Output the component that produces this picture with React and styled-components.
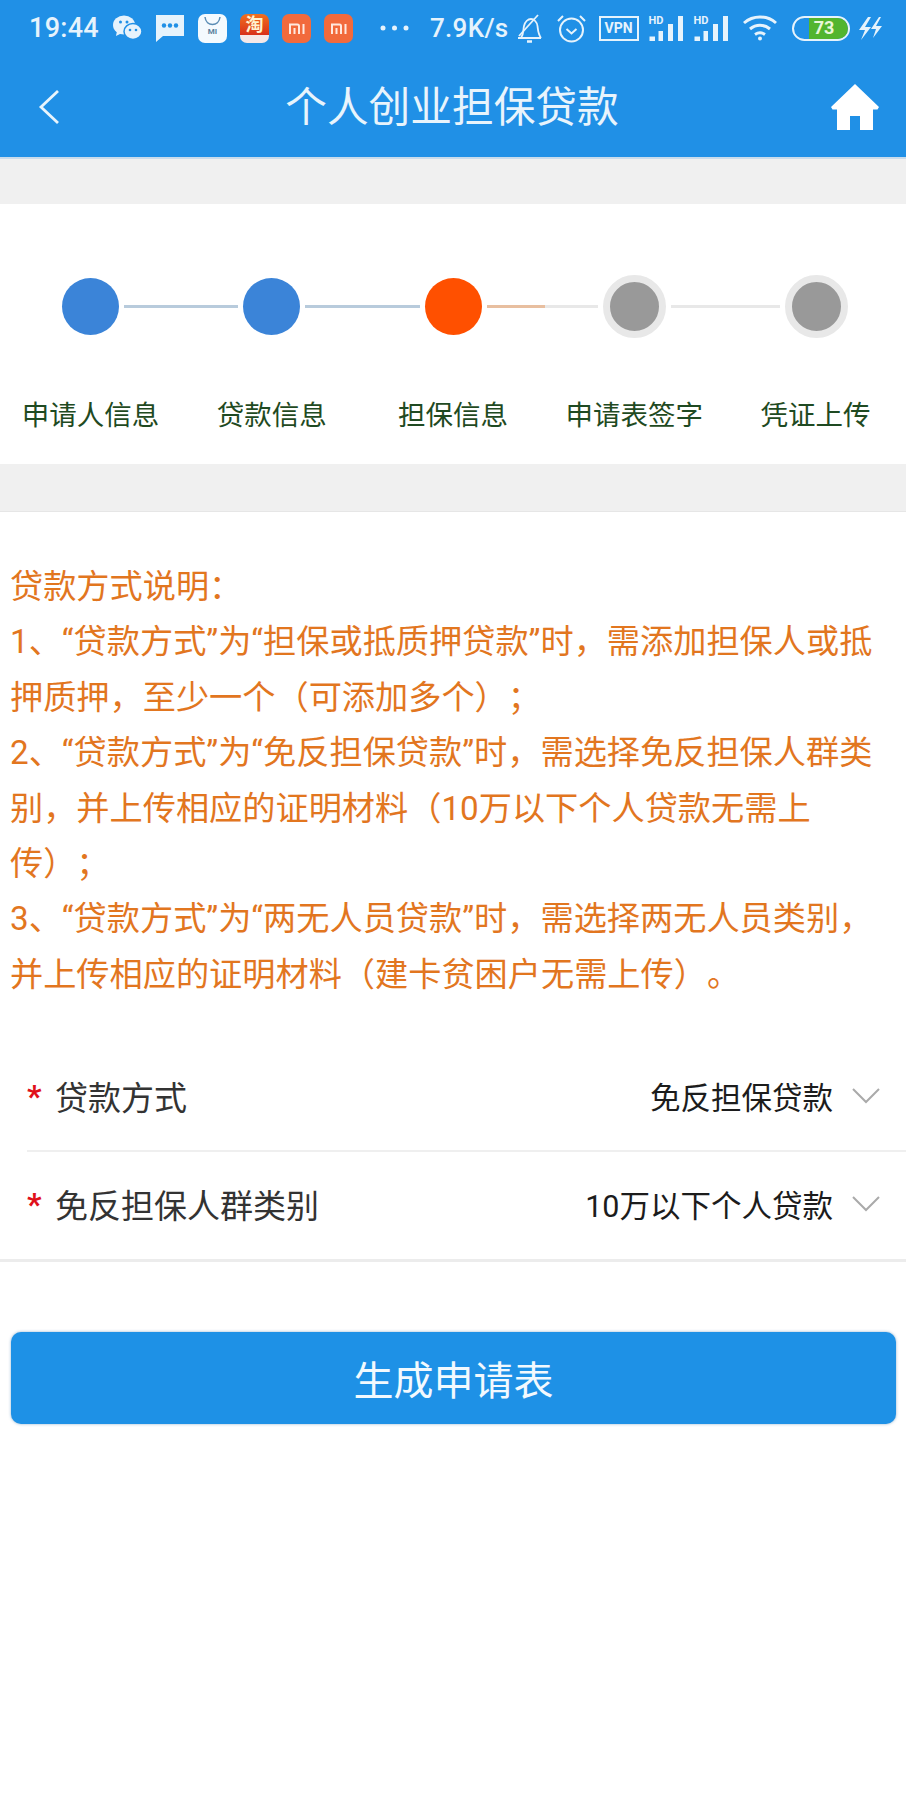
import React from "react";
import styled, { createGlobalStyle } from "styled-components";

const GlobalStyle = createGlobalStyle`
  html, body {
    margin: 0;
    padding: 0;
    background: #ffffff;
    font-family: Roboto, "Noto Sans CJK SC", sans-serif;
  }
`;

const Page = styled.div`
  width: 906px;
  height: 1812px;
  background: #ffffff;
  overflow: hidden;
`;

const Header = styled.header`
  background: #2090e6;
  height: 157px;
  border-bottom: 2px solid #c9dcec;
  box-sizing: content-box;
`;

const StatusBar = styled.div`
  height: 56px;
  display: flex;
  align-items: center;
  padding-left: 29px;
  color: #e6f3fc;
`;

const StatusText = styled.span`
  font-size: ${(p) => p.$size || 26}px;
  font-weight: 500;
  margin-left: ${(p) => p.$ml || 0}px;
  letter-spacing: 0.3px;
  white-space: nowrap;
`;

const Slot = styled.span`
  display: inline-flex;
  margin-left: ${(p) => p.$ml || 0}px;
`;

const AppIcon = styled.span`
  position: relative;
  display: inline-flex;
  align-items: center;
  justify-content: center;
  flex: none;
  width: 29px;
  height: 29px;
  margin-left: ${(p) => p.$ml || 0}px;
  border-radius: 7px;
  background: ${(p) => p.$bg};
  color: ${(p) => p.$color || "#fff"};
  font-size: ${(p) => p.$size || 11}px;
  font-weight: 700;
  line-height: 1;
`;

const StoreArc = styled.svg`
  position: absolute;
  left: 6px;
  top: 3px;
`;

const StoreMark = styled.span`
  margin-top: 8px;
`;

const TaobaoMark = styled.span`
  margin-top: -6px;
`;

const VpnBadge = styled.span`
  display: inline-flex;
  align-items: center;
  justify-content: center;
  box-sizing: border-box;
  width: 40px;
  height: 25px;
  margin-left: 13px;
  border: 2px solid #e6f3fc;
  font-size: 14px;
  font-weight: 700;
`;

const HdSignal = styled.span`
  display: inline-flex;
  position: relative;
  width: 35px;
  height: 25px;
  margin-left: ${(p) => p.$ml || 0}px;
`;

const HdLabel = styled.span`
  position: absolute;
  left: 0;
  top: -1px;
  font-size: 11px;
  font-weight: 700;
  line-height: 1;
`;

const Battery = styled.span`
  display: inline-flex;
  align-items: center;
  box-sizing: border-box;
  width: 58px;
  height: 25px;
  margin-left: 14px;
  padding-left: 15px;
  border: 2px solid #e6f3fc;
  border-radius: 13px;
  overflow: hidden;
`;

const BatteryFill = styled.span`
  display: inline-flex;
  align-items: center;
  justify-content: center;
  box-sizing: border-box;
  height: 100%;
  width: 100%;
  padding-right: 8px;
  background: #52b52e;
  color: #e9f7d8;
  font-size: 18px;
  font-weight: 700;
  line-height: 1;
`;

const NavBar = styled.div`
  height: 101px;
  display: grid;
  grid-template-columns: 1fr auto 1fr;
  align-items: center;
`;

const BackButton = styled.button`
  justify-self: start;
  display: flex;
  padding: 0 0 0 38px;
  border: 0;
  background: none;
`;

const Title = styled.h1`
  margin: 2px 2px 0 0;
  color: #e8f4fc;
  font-size: 41.7px;
  font-weight: 400;
  line-height: 1;
`;

const HomeButton = styled.button`
  justify-self: end;
  display: flex;
  padding: 0 27px 0 0;
  border: 0;
  background: none;
`;

const Band = styled.div`
  height: ${(p) => p.$h}px;
  background: #f0f0f0;
  border-bottom: ${(p) => (p.$line ? "1px solid #e6e6e6" : "0")};
`;

const Stepper = styled.section`
  height: 260px;
  background: #fff;
`;

const Track = styled.div`
  display: flex;
  align-items: center;
  height: 63px;
  padding: 71px 0 0 62px;
`;

const Dot = styled.span`
  flex: none;
  box-sizing: border-box;
  width: ${(p) => (p.$state === "todo" ? 63 : 57)}px;
  height: ${(p) => (p.$state === "todo" ? 63 : 57)}px;
  border-radius: 50%;
  background: ${(p) =>
    p.$state === "done" ? "#3b84d8" : p.$state === "now" ? "#ff5000" : "#999999"};
  border: ${(p) => (p.$state === "todo" ? "7px solid #e8e8e8" : "0")};
`;

const Line = styled.span`
  flex: none;
  width: ${(p) => p.$w}px;
  height: 3px;
  margin: 0 5px;
  background: ${(p) => p.$bg};
`;

const Labels = styled.div`
  display: grid;
  grid-template-columns: repeat(5, 1fr);
  margin-top: 58px;
`;

const Label = styled.span`
  text-align: center;
  color: #1f4a22;
  font-size: 27.5px;
  line-height: 40px;
`;

const Notice = styled.div`
  margin: 47px 0 0;
  padding: 0 18px 0 10px;
  color: #e2761f;
  font-size: 33.2px;
  line-height: 55.4px;
  text-spacing-trim: space-all;
`;

const Form = styled.div`
  margin-top: 43px;
  border-bottom: 3px solid #ececec;
`;

const Row = styled.div`
  display: flex;
  box-sizing: border-box;
  align-items: center;
  height: 107px;
  margin-left: 27px;
  padding-bottom: 3px;
  border-bottom: ${(p) => (p.$last ? "0" : "2px solid #efefef")};
`;

const Star = styled.span`
  width: 28px;
  color: #e0101a;
  font-size: 32px;
  font-weight: 700;
  line-height: 1;
`;

const RowLabel = styled.span`
  flex: 1;
  color: #333333;
  font-size: 33px;
`;

const RowValue = styled.span`
  color: #1c1c1c;
  font-size: 30.5px;
`;

const Chevron = styled.span`
  display: flex;
  margin: 0 26px 0 19px;
`;

const SubmitWrap = styled.div`
  padding: 70px 10px 0 11px;
`;

const Submit = styled.button`
  display: block;
  width: 100%;
  height: 92px;
  border: 0;
  border-radius: 10px;
  background: #1e91e6;
  box-shadow: 0 0 3px rgba(30, 100, 160, 0.5);
  color: #f2f9fe;
  font-family: inherit;
  font-size: 40px;
`;

const steps = [
  { label: "申请人信息", state: "done" },
  { label: "贷款信息", state: "done" },
  { label: "担保信息", state: "now" },
  { label: "申请表签字", state: "todo" },
  { label: "凭证上传", state: "todo" },
];

const lines = [
  "贷款方式说明：",
  "1、“贷款方式”为“担保或抵质押贷款”时，需添加担保人或抵押质押，至少一个（可添加多个）；",
  "2、“贷款方式”为“免反担保贷款”时，需选择免反担保人群类别，并上传相应的证明材料（10万以下个人贷款无需上传）；",
  "3、“贷款方式”为“两无人员贷款”时，需选择两无人员类别，并上传相应的证明材料（建卡贫困户无需上传）。",
];

const C = "#e6f3fc";

const Wechat = () => (
  <svg width="29" height="26" viewBox="0 0 29 26">
    <ellipse cx="11" cy="10" rx="11" ry="9.5" fill={C} />
    <path d="M4 16l-1 5 6-3z" fill={C} />
    <ellipse cx="20" cy="16.5" rx="9" ry="8" fill={C} stroke="#2090e6" strokeWidth="1.5" />
    <circle cx="7.5" cy="7" r="1.5" fill="#2090e6" />
    <circle cx="14" cy="7" r="1.5" fill="#2090e6" />
    <circle cx="17" cy="15" r="1.3" fill="#2090e6" />
    <circle cx="23" cy="15" r="1.3" fill="#2090e6" />
  </svg>
);

const Message = () => (
  <svg width="28" height="27" viewBox="0 0 28 27">
    <path d="M0 0h28v21H7l-7 6z" fill={C} />
    <circle cx="8" cy="10.5" r="2.2" fill="#2090e6" />
    <circle cx="14" cy="10.5" r="2.2" fill="#2090e6" />
    <circle cx="20" cy="10.5" r="2.2" fill="#2090e6" />
  </svg>
);

const MiLogo = () => (
  <svg width="16" height="11" viewBox="0 0 16 11" fill="none" stroke="#ffe9df" strokeWidth="2">
    <path d="M1 11V1.500h7.500a1.500 1.500 0 0 1 1.500 1.500v8M5.500 5v6M14.500 1v10" />
  </svg>
);

const Dots = () => (
  <svg width="29" height="6" viewBox="0 0 29 6" fill={C}>
    <circle cx="3" cy="3" r="2.5" />
    <circle cx="14.5" cy="3" r="2.5" />
    <circle cx="26" cy="3" r="2.5" />
  </svg>
);

const Bell = () => (
  <svg width="27" height="29" viewBox="0 0 27 29" fill="none" stroke={C} strokeWidth="1.8">
    <path d="M2 24h23M5 24c3-4 2-8 3-12s4-7 7-7 6 3 6.500 7 .5 8 3.500 12" />
    <path d="M11 27.500h5" strokeWidth="2.500" />
    <path d="M3 22L22 1" />
  </svg>
);

const Alarm = () => (
  <svg width="29" height="29" viewBox="0 0 29 29" fill="none" stroke={C} strokeWidth="2">
    <circle cx="14.500" cy="16" r="11.500" />
    <path d="M9.500 15l5 4.500 5-4.500" />
    <path d="M1 7l5-5M28 7l-5-5" />
  </svg>
);

const Bars = () => (
  <svg width="35" height="25" viewBox="0 0 35 25" fill={C}>
    <rect x="0.500" y="20.500" width="5.500" height="4.500" />
    <rect x="9.500" y="15" width="4.500" height="10" />
    <rect x="19" y="8" width="5" height="17" />
    <rect x="29" y="0" width="5" height="25" />
  </svg>
);

const Wifi = () => (
  <svg width="36" height="26" viewBox="0 0 36 26" fill="none" stroke={C} strokeWidth="3">
    <path d="M2 8c9-8 23-8 32 0" />
    <path d="M8 14c6-5 14-5 20 0" />
    <path d="M13 19.500c3-2 7-2 10 0" />
    <circle cx="18" cy="23.500" r="2" fill={C} stroke="none" />
  </svg>
);

const Charge = () => (
  <svg width="24" height="25" viewBox="0 0 24 25" fill={C}>
    <path d="M10 1L1 14h6l-4 10 10-13H7l6-10z" />
    <path d="M21 1l-8 12h5l-3 9 9-12h-6l5-9z" />
  </svg>
);

const Store = () => (
  <AppIcon $ml={14} $bg="#f4fafe" $color="#5a7f9c" $size={8}>
    <StoreArc width="17" height="9" viewBox="0 0 17 9" fill="none" stroke="#5a8cb4" strokeWidth="1.500">
      <path d="M1 0c1 10 14 10 15 0" />
    </StoreArc>
    <StoreMark>MI</StoreMark>
  </AppIcon>
);

const Caret = () => (
  <Chevron>
    <svg width="28" height="16" viewBox="0 0 28 16" fill="none" stroke="#aaaaaa" strokeWidth="2">
      <path d="M1 1l13 13L27 1" />
    </svg>
  </Chevron>
);

export default function App() {
  return (
    <Page>
      <GlobalStyle />
      <Header>
        <StatusBar>
          <StatusText $size={27}>19:44</StatusText>
          <Slot $ml={14}><Wechat /></Slot>
          <Slot $ml={14}><Message /></Slot>
          <Store />
          <AppIcon
            $ml={13}
            $bg="linear-gradient(180deg, #f0701e 0%, #d8301a 72%, #f4e8e8 72%, #f4e8e8 100%)"
            $color="#fff3d0"
            $size={18}
          >
            <TaobaoMark>淘</TaobaoMark>
          </AppIcon>
          <AppIcon $ml={13} $bg="#f26a3c"><MiLogo /></AppIcon>
          <AppIcon $ml={13} $bg="#f26a3c"><MiLogo /></AppIcon>
          <Slot $ml={27}><Dots /></Slot>
          <StatusText $ml={21} $size={26}>7.9K/s</StatusText>
          <Slot $ml={7}><Bell /></Slot>
          <Slot $ml={14}><Alarm /></Slot>
          <VpnBadge>VPN</VpnBadge>
          <HdSignal $ml={10}><HdLabel>HD</HdLabel><Bars /></HdSignal>
          <HdSignal $ml={10}><HdLabel>HD</HdLabel><Bars /></HdSignal>
          <Slot $ml={13}><Wifi /></Slot>
          <Battery><BatteryFill>73</BatteryFill></Battery>
          <Slot $ml={8}><Charge /></Slot>
        </StatusBar>
        <NavBar>
          <BackButton aria-label="返回">
            <svg width="22" height="36" viewBox="0 0 22 36" fill="none" stroke="#e8f4fc" strokeWidth="2.800">
              <path d="M20 2L3 18l17 16" />
            </svg>
          </BackButton>
          <Title>个人创业担保贷款</Title>
          <HomeButton aria-label="首页">
            <svg width="48" height="46" viewBox="0 0 48 46" fill="#ffffff">
              <path d="M24 0L48 23l-1.500 2.500H42V46H29V32H19v14H6V25.500H1.500L0 23z" />
            </svg>
          </HomeButton>
        </NavBar>
      </Header>
      <Band $h={45} />
      <Stepper>
        <Track>
          <Dot $state="done" />
          <Line $w={114} $bg="#b8cbdc" />
          <Dot $state="done" />
          <Line $w={115} $bg="#b8cbdc" />
          <Dot $state="now" />
          <Line $w={111} $bg="linear-gradient(90deg, #e8bfa0 0 52%, #e8e8e8 52% 100%)" />
          <Dot $state="todo" />
          <Line $w={109} $bg="#e8e8e8" />
          <Dot $state="todo" />
        </Track>
        <Labels>
          {steps.map((s) => (
            <Label key={s.label}>{s.label}</Label>
          ))}
        </Labels>
      </Stepper>
      <Band $h={47} $line />
      <Notice>
        {lines.map((l) => (
          <div key={l}>{l}</div>
        ))}
      </Notice>
      <Form>
        <Row>
          <Star>*</Star>
          <RowLabel>贷款方式</RowLabel>
          <RowValue>免反担保贷款</RowValue>
          <Caret />
        </Row>
        <Row $last>
          <Star>*</Star>
          <RowLabel>免反担保人群类别</RowLabel>
          <RowValue>10万以下个人贷款</RowValue>
          <Caret />
        </Row>
      </Form>
      <SubmitWrap>
        <Submit>生成申请表</Submit>
      </SubmitWrap>
    </Page>
  );
}
